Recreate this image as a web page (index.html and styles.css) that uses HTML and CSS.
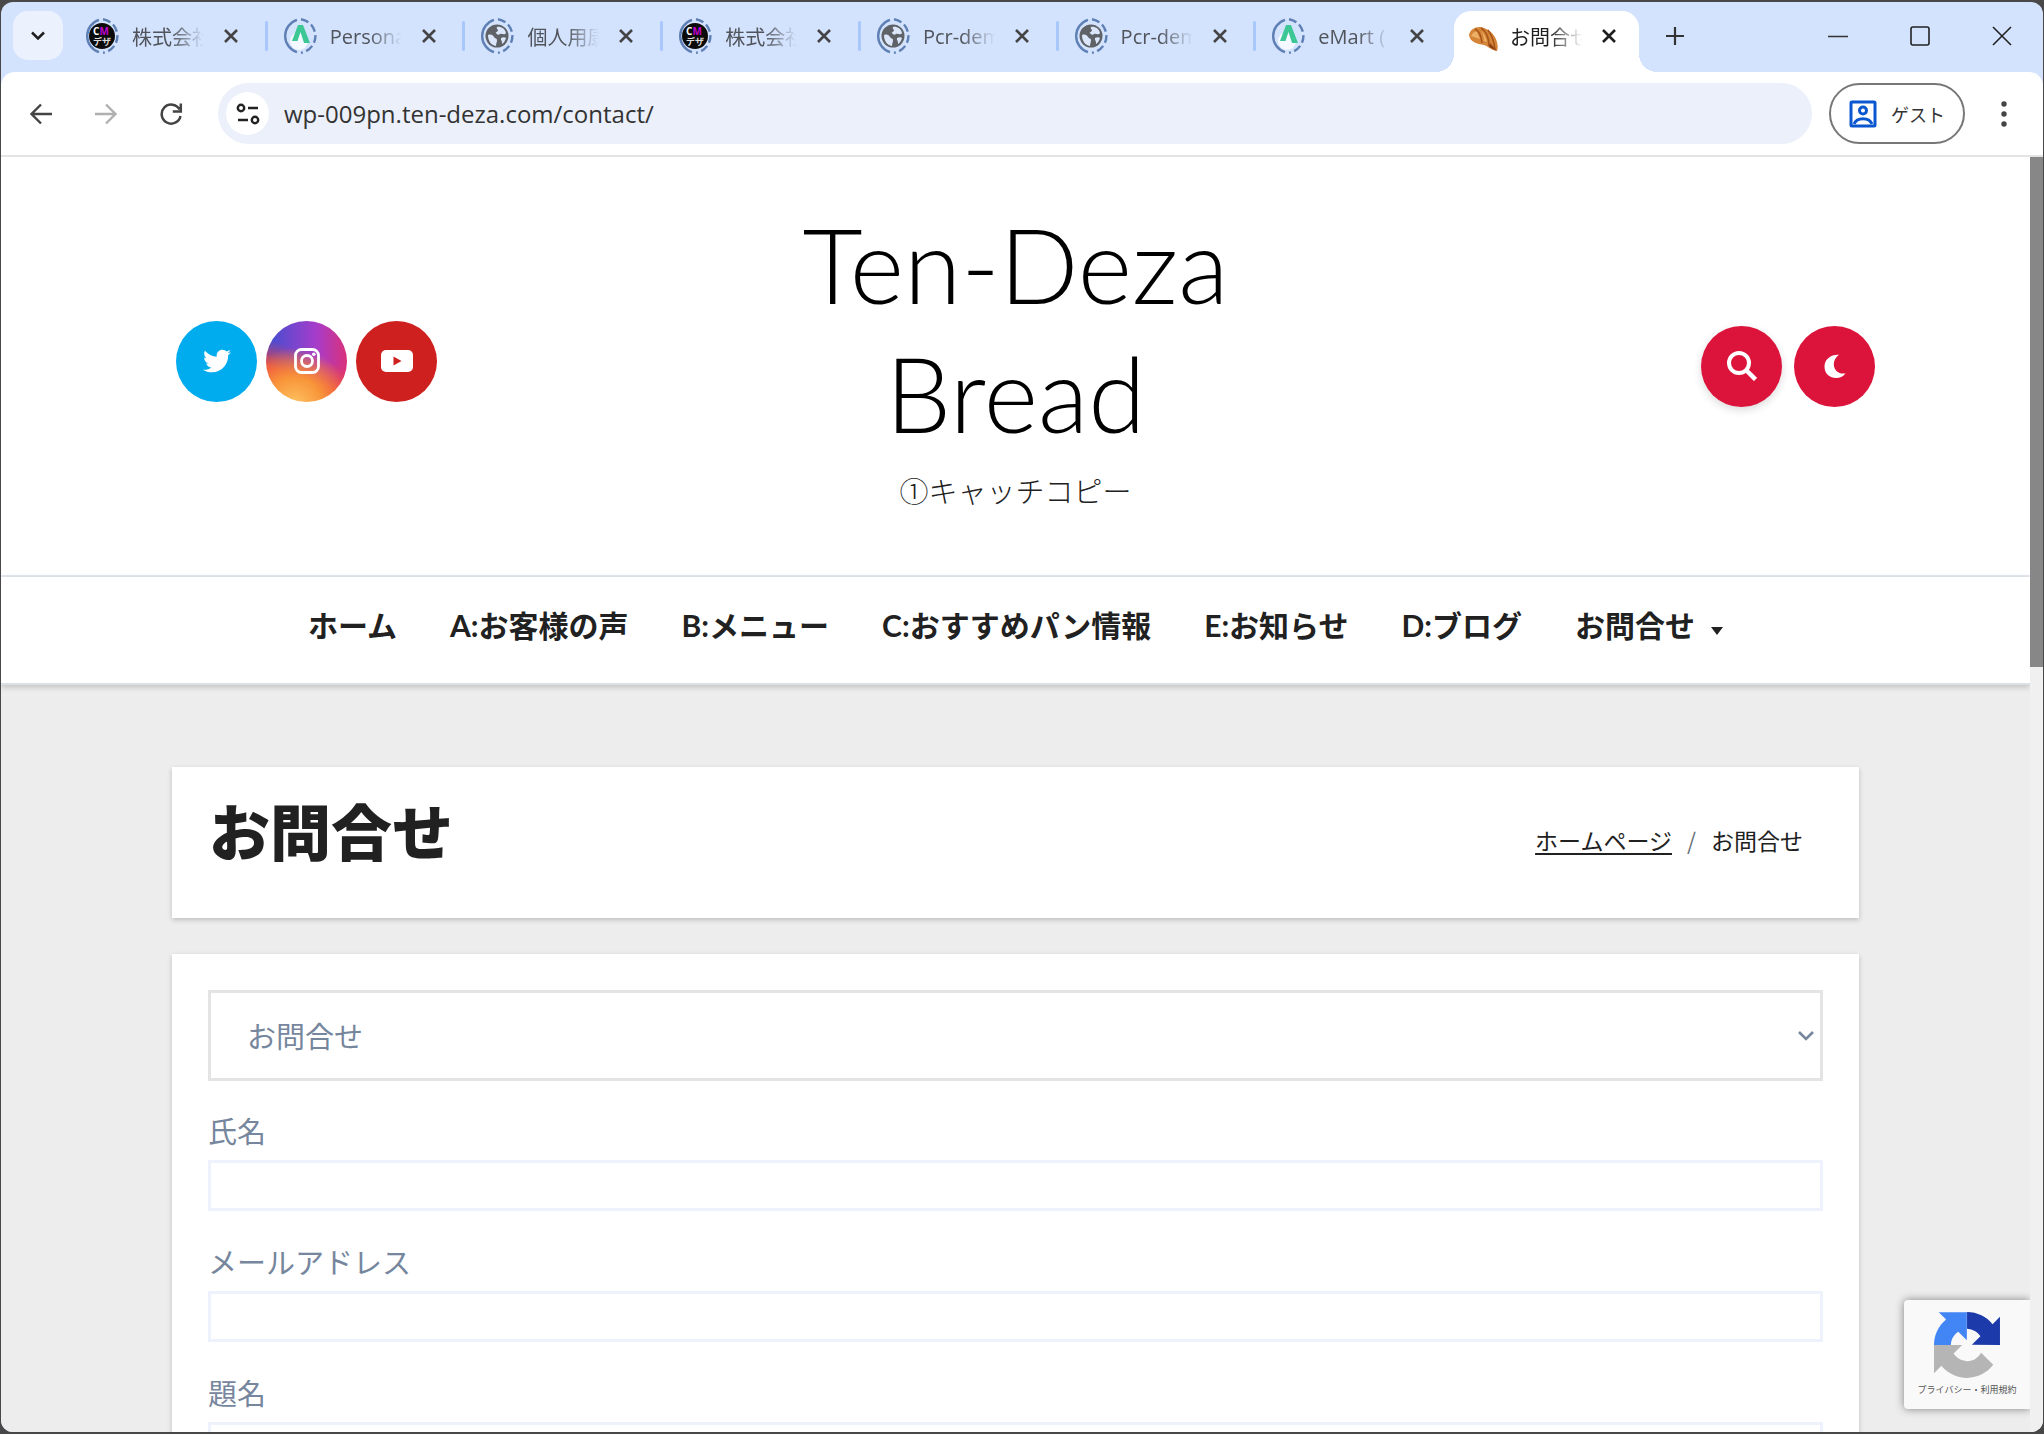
FILE: index.html
```html
<!DOCTYPE html>
<html lang="ja">
<head>
<meta charset="utf-8">
<meta name="viewport" content="width=device-width, initial-scale=1">
<title>お問合せ</title>
<link rel="stylesheet" href="styles.css">
</head>
<body>
<svg class="sprite" aria-hidden="true">
  <symbol id="ring" viewBox="0 0 36 36">
    <path d="M15 34.200A17 17 0 0 1 15 1.800" fill="none" stroke="#5f80b4" stroke-width="2.400"/>
    <path d="M19 1.200A17 17 0 0 1 19 34.800" fill="none" stroke="#5f80b4" stroke-width="2.400" stroke-dasharray="8 3.500"/>
  </symbol>
  <symbol id="fav-a" viewBox="0 0 36 36">
    <use href="#ring"/>
    <circle cx="17" cy="23" r="9" fill="#fff" opacity=".75"/>
    <path d="M10 23L16 7h5l7 18h-6L18.500 14l-3 9z" fill="#3cc795"/>
  </symbol>
  <symbol id="fav-globe" viewBox="0 0 36 36">
    <use href="#ring"/>
    <circle cx="18" cy="18" r="11.500" fill="#5f6368"/>
    <path d="M9 17c3-1 5 0 6 2 1 2 3 1 3 3 0 3-1 3-1 6-5-1-8-5-8-11zM18 9c3-1 8 1 9 6-2 3-4 0-6 1-1 1-3 1-4-1-1-1 2-1 2-3 0-1-2-1-1-3zM22 20c2-1 4-1 5 0-1 3-2 5-4 6 0-2 0-3-1-4z" fill="#dbe6fb"/>
  </symbol>
  <symbol id="x" viewBox="0 0 16 16"><path d="M2 2l12 12M14 2L2 14" fill="none" stroke="currentColor" stroke-width="2.600"/></symbol>
</svg>

<div class="window">
  <header class="tabstrip">
    <button class="tab-search" aria-label="タブを検索"><svg width="16" height="12" viewBox="0 0 16 12"><path d="M2 2.500l6 6 6-6" fill="none" stroke="#1f1f1f" stroke-width="2.500"/></svg></button>
    <div class="tabs">
      <div class="tab"><svg class="fav" viewBox="0 0 36 36"><use href="#ring"/><circle cx="18" cy="18" r="13" fill="#0b0b0b"/><text x="9" y="17" font-size="10" font-weight="700" fill="#fff">C<tspan fill="#c000d0">M</tspan></text><text x="9" y="27" font-size="9" font-weight="700" fill="#ddd">デザ</text></svg><span class="tab-title">株式会社</span><button class="tab-close" aria-label="閉じる"><svg><use href="#x"/></svg></button></div>
      <div class="tab"><svg class="fav"><use href="#fav-a"/></svg><span class="tab-title">Personal</span><button class="tab-close" aria-label="閉じる"><svg><use href="#x"/></svg></button></div>
      <div class="tab"><svg class="fav"><use href="#fav-globe"/></svg><span class="tab-title">個人用康</span><button class="tab-close" aria-label="閉じる"><svg><use href="#x"/></svg></button></div>
      <div class="tab"><svg class="fav" viewBox="0 0 36 36"><use href="#ring"/><circle cx="18" cy="18" r="13" fill="#0b0b0b"/><text x="9" y="17" font-size="10" font-weight="700" fill="#fff">C<tspan fill="#c000d0">M</tspan></text><text x="9" y="27" font-size="9" font-weight="700" fill="#ddd">デザ</text></svg><span class="tab-title">株式会社</span><button class="tab-close" aria-label="閉じる"><svg><use href="#x"/></svg></button></div>
      <div class="tab"><svg class="fav"><use href="#fav-globe"/></svg><span class="tab-title">Pcr-demo</span><button class="tab-close" aria-label="閉じる"><svg><use href="#x"/></svg></button></div>
      <div class="tab"><svg class="fav"><use href="#fav-globe"/></svg><span class="tab-title">Pcr-demo</span><button class="tab-close" aria-label="閉じる"><svg><use href="#x"/></svg></button></div>
      <div class="tab"><svg class="fav"><use href="#fav-a"/></svg><span class="tab-title">eMart (</span><button class="tab-close" aria-label="閉じる"><svg><use href="#x"/></svg></button></div>
      <div class="tab active">
        <svg class="fav" viewBox="0 0 36 36"><path d="M4 17c1-5 5-8 11-8 8 1 15 7 17 15 1 4 1 6 0 9-4 0-8-4-13-6-7-1-14-3-15-10z" fill="#d58538"/><path d="M10 11c3 1 6 6 7 14M16 10c5 3 8 10 8 18M23 12c4 5 6 12 7 19" fill="none" stroke="#a6531a" stroke-width="1.500"/><path d="M6 18c2-4 4-5 6-4l3 7zM16 13c3 2 5 7 6 11l-3-1c0-4-1-7-3-10z" fill="#edb066"/><path d="M25 25l7 8-8-4z" fill="#8d3f14"/></svg>
        <span class="tab-title">お問合せ</span><button class="tab-close" aria-label="閉じる"><svg><use href="#x"/></svg></button></div>
    </div>
    <button class="new-tab" aria-label="新しいタブ"><svg width="20" height="20" viewBox="0 0 20 20"><path d="M10 1v18M1 10h18" stroke="#333" stroke-width="2.200"/></svg></button>
    <div class="win-controls">
      <button aria-label="最小化"><svg width="20" height="20" viewBox="0 0 20 20"><path d="M0 10.500h20" stroke="#333" stroke-width="1.500"/></svg></button>
      <button aria-label="最大化"><svg width="20" height="20" viewBox="0 0 20 20"><rect x="1" y="1" width="18" height="18" rx="2" fill="none" stroke="#222" stroke-width="1.600"/></svg></button>
      <button aria-label="閉じる"><svg width="20" height="20" viewBox="0 0 20 20"><path d="M1 1l18 18M19 1L1 19" stroke="#222" stroke-width="1.600"/></svg></button>
    </div>
  </header>

  <div class="toolbar">
    <button class="nav-btn" aria-label="戻る"><svg width="24" height="24" viewBox="0 0 24 24"><path d="M23 12H3M12 2.500L2.500 12l9.500 9.500" fill="none" stroke="#444" stroke-width="2.400"/></svg></button>
    <button class="nav-btn" aria-label="進む"><svg width="24" height="24" viewBox="0 0 24 24"><path d="M1 12h20M12 2.500l9.500 9.500-9.500 9.500" fill="none" stroke="#b0b0b0" stroke-width="2.400"/></svg></button>
    <button class="nav-btn" aria-label="再読み込み"><svg width="24" height="24" viewBox="0 0 24 24"><path d="M20.500 7.500A9.500 9.500 0 1 0 21.500 14M21.800 1.500v8h-8" fill="none" stroke="#444" stroke-width="2.500"/></svg></button>
    <div class="omnibox">
      <button class="site-info" aria-label="サイト情報"><svg width="24" height="24" viewBox="0 0 24 24"><g fill="none" stroke="#222" stroke-width="2.400"><circle cx="5" cy="6" r="3.200"/><path d="M12 6h10M2 18h10"/><circle cx="19" cy="18" r="3.200"/></g></svg></button>
      <input class="url" type="text" aria-label="アドレス" value="wp-009pn.ten-deza.com/contact/">
    </div>
    <button class="guest"><svg width="28" height="28" viewBox="0 0 28 28"><g fill="none" stroke="#0b57d0" stroke-width="3"><rect x="2" y="2" width="24" height="24" rx="1"/><circle cx="14" cy="10.500" r="3.500"/><path d="M5 24c3-7 15-7 18 0"/></g></svg>ゲスト</button>
    <button class="menu" aria-label="メニュー"><svg width="6" height="26" viewBox="0 0 6 26"><g fill="#444"><circle cx="3" cy="3" r="2.700"/><circle cx="3" cy="13" r="2.700"/><circle cx="3" cy="23" r="2.700"/></g></svg></button>
  </div>

  <div class="viewport">
    <div class="page">
      <header class="site-header">
        <div class="social">
          <a class="round twitter" href="#" aria-label="Twitter"><svg width="28" height="28" viewBox="0 0 512 512"><path fill="#fff" d="M459.370 151.716c.325 4.548.325 9.097.325 13.645 0 138.720-105.583 298.558-298.558 298.558-59.452 0-114.680-17.219-161.137-47.106 8.447.974 16.568 1.299 25.340 1.299 49.055 0 94.213-16.568 130.274-44.832-46.132-.975-84.792-31.188-98.112-72.772 6.498.974 12.995 1.624 19.818 1.624 9.421 0 18.843-1.300 27.614-3.573-48.081-9.747-84.143-51.980-84.143-102.985v-1.299c13.969 7.797 30.214 12.670 47.431 13.319-28.264-18.843-46.781-51.005-46.781-87.391 0-19.492 5.197-37.360 14.294-52.954 51.655 63.675 129.300 105.258 216.365 109.807-1.624-7.797-2.599-15.918-2.599-24.040 0-57.828 46.782-104.934 104.934-104.934 30.213 0 57.502 12.670 76.670 33.137 23.715-4.548 46.456-13.320 66.599-25.340-7.798 24.366-24.366 44.833-46.132 57.827 21.117-2.273 41.584-8.122 60.426-16.243-14.292 20.791-32.161 39.308-52.628 54.253z"/></svg></a>
          <a class="round instagram" href="#" aria-label="Instagram"><svg width="28" height="28" viewBox="0 0 28 28"><g fill="none" stroke="#fff"><rect x="2.500" y="2.500" width="23" height="23" rx="6" stroke-width="2.800"/><circle cx="14" cy="14" r="5.500" stroke-width="2.800"/></g><circle cx="20.800" cy="7.200" r="1.800" fill="#fff"/></svg></a>
          <a class="round youtube" href="#" aria-label="YouTube"><svg width="32" height="24" viewBox="0 0 32 24"><rect x="0" y="1" width="32" height="22" rx="5" fill="#fff"/><path d="M12.500 7.500v9l8-4.500z" fill="#cd201f"/></svg></a>
        </div>
        <div class="brand">
          <h1><a href="#">Ten-Deza<br>Bread</a></h1>
          <p>①キャッチコピー</p>
        </div>
        <div class="tools">
          <button class="round search" aria-label="検索"><svg width="30" height="30" viewBox="0 0 30 30"><g fill="none" stroke="#fff"><circle cx="12" cy="12" r="10" stroke-width="4"/><path d="M19 19l9.500 9.500" stroke-width="4.500"/></g></svg></button>
          <button class="round" aria-label="ダークモード"><svg width="22" height="24" viewBox="0 0 22 24"><path d="M15 .700C8 0 .500 4.500.500 12.500.500 20 6 24 12 24c4 0 7-1.500 9.500-4.500C10 21 5.500 8 15 .700z" fill="#fff"/></svg></button>
        </div>
      </header>
      <nav class="site-nav">
        <a href="#">ホーム</a>
        <a href="#">A:お客様の声</a>
        <a href="#">B:メニュー</a>
        <a href="#">C:おすすめパン情報</a>
        <a href="#">E:お知らせ</a>
        <a href="#">D:ブログ</a>
        <a href="#">お問合せ<span class="caret"></span></a>
      </nav>
      <main>
        <section class="card title-card">
          <h2>お問合せ</h2>
          <div class="crumbs"><a href="#">ホームページ</a><span class="slash">/</span><span>お問合せ</span></div>
        </section>
        <form class="card form-card">
          <div class="select-wrap">
            <select aria-label="お問合せ"><option>お問合せ</option></select>
            <svg class="chevron" width="18" height="12" viewBox="0 0 18 12"><path d="M2 2l7 7 7-7" fill="none" stroke="#76869d" stroke-width="2.600"/></svg>
          </div>
          <label for="name">氏名</label><input id="name" type="text">
          <label for="mail">メールアドレス</label><input id="mail" type="email">
          <label for="subject">題名</label><input id="subject" type="text">
        </form>
      </main>
      <a class="recaptcha" href="#">
        <svg width="66" height="66" viewBox="0 0 64 64"><path d="M64 31.955l-.033-1.370V4.687l-7.160 7.160C50.948 4.674 42.033.093 32.050.093v16.160c.485 0 .860.057 1.135.163 4.976.393 9.288 3.140 11.828 7.124l-8.307 8.307L64 31.953" fill="#1c3aa9"/><path d="M31.862.094l-1.370.033H4.594l7.160 7.160C4.580 13.147 0 22.060 0 32.046h16.260c0-.485.057-.860.163-1.135.393-4.976 3.140-9.288 7.124-11.828l8.307 8.307L31.860.095" fill="#4285f4"/><path d="M.001 32.045l.033 1.370v25.898l7.160-7.160c5.860 7.173 14.774 11.754 24.760 11.754 10.400 0 19.622-4.960 25.458-12.640l-11.736-11.860a15.550 15.550 0 0 1-4.754 5.334c-2.050 1.600-4.952 2.906-8.968 2.906-.485 0-.860-.057-1.135-.163-4.976-.393-9.288-3.140-11.828-7.124l8.307-8.307c-10.522.040-22.400.066-27.295-.005" fill="#b5b5b5"/></svg>
        <span>プライバシー・利用規約</span>
      </a>
    </div>
    <div class="scrollbar"><div class="thumb"></div></div>
  </div>
</div>
</body>
</html>
```

FILE: styles.css
```css
* { box-sizing: border-box; }

body {
  margin: 0;
  height: 100vh;
  padding: 2px 1px;
  overflow: hidden;
  background: #484848;
  color: #212121;
  font-family: "Noto Sans CJK JP", sans-serif;
}

button {
  display: flex;
  align-items: center;
  justify-content: center;
  padding: 0;
  border: 0;
  background: none;
  font: inherit;
  color: inherit;
}

a { color: inherit; text-decoration: none; }
svg { flex: none; }
.sprite { position: absolute; width: 0; height: 0; }

.window {
  display: flex;
  flex-direction: column;
  height: 100%;
  border-radius: 12px;
  overflow: hidden;
  background: #d3e2fd;
}

/* Tab strip */
.tabstrip {
  display: flex;
  align-items: flex-start;
  height: 70px;
  padding-left: 12px;
  font-family: "Open Sans", "Noto Sans CJK JP", sans-serif;
  font-size: 20px;
}
.tab-search {
  flex: none;
  width: 50px;
  height: 49px;
  margin-top: 9px;
  border-radius: 15px;
  background: #ebf2fe;
}
.tabs {
  display: flex;
  flex: 0 1 1569px;
  min-width: 0;
  margin: 9px 0 0 7px;
}
.tab {
  position: relative;
  display: flex;
  align-items: center;
  flex: 1 1 0;
  min-width: 0;
  height: 50px;
  padding-left: 14px;
  color: #50545b;
}
.tab:not(.active)::after {
  content: "";
  position: absolute;
  right: 0;
  top: 10px;
  width: 3px;
  height: 30px;
  border-radius: 2px;
  background: #a8c7fa;
}
.tab:nth-child(7)::after { display: none; }
.fav { width: 36px; height: 36px; margin-right: 12px; }
.tab-title {
  width: 72px;
  overflow: hidden;
  white-space: nowrap;
  -webkit-mask-image: linear-gradient(90deg, #000 55%, transparent);
  mask-image: linear-gradient(90deg, #000 55%, transparent);
}
.tab-close { width: 18px; height: 18px; margin-left: 18px; color: #444; }
.tab-close svg { width: 16px; height: 16px; }
.tab.active {
  flex: 0 0 185px;
  height: 61px;
  padding: 0 0 11px 11px;
  border-radius: 17px 17px 0 0;
  background: #fff;
  color: #1f1f1f;
}
.tab.active .fav { margin-right: 9px; }
.tab.active .tab-close { color: #1f1f1f; }
.tab.active::before,
.tab.active::after {
  content: "";
  position: absolute;
  bottom: 0;
  width: 18px;
  height: 18px;
}
.tab.active::before { left: -18px; background: radial-gradient(circle at 0 0, transparent 18px, #fff 18px); }
.tab.active::after { right: -18px; background: radial-gradient(circle at 100% 0, transparent 18px, #fff 18px); }
.new-tab { width: 40px; height: 40px; margin: 14px 0 0 16px; }
.win-controls { display: flex; margin-left: auto; }
.win-controls button { width: 82px; height: 68px; }

/* Toolbar */
.toolbar {
  display: flex;
  align-items: center;
  height: 85px;
  padding: 0 14px 0 7px;
  border-bottom: 2px solid #e4e4e4;
  border-radius: 14px 14px 0 0;
  background: #fff;
}
.nav-btn { width: 65px; height: 60px; }
.omnibox {
  display: flex;
  flex: 1;
  align-items: center;
  gap: 15px;
  height: 61px;
  margin-left: 15px;
  padding-left: 8px;
  border-radius: 31px;
  background: #ebf0fa;
}
.site-info { width: 43px; height: 43px; border-radius: 50%; background: #fff; }
.url {
  flex: 1;
  padding: 0;
  border: 0;
  outline: 0;
  background: none;
  color: #333;
  font: 24px/36px "Open Sans", sans-serif;
}
.guest {
  gap: 14px;
  width: 136px;
  height: 61px;
  margin-left: 17px;
  border: 2px solid #777;
  border-radius: 31px;
  color: #333;
  font-size: 18px;
}
.menu { width: 50px; height: 50px; margin-left: 14px; }

/* Viewport */
.viewport { display: flex; flex: 1; min-height: 0; background: #ededed; }
.page { position: relative; flex: 1; min-width: 0; overflow: hidden; }
.scrollbar { width: 13px; background: #f0f0f0; }
.thumb { height: 40%; background: #878787; }

.site-header {
  display: grid;
  grid-template-columns: 1fr auto 1fr;
  align-items: center;
  padding: 42px 155px;
  border-bottom: 2px solid #e4eaef;
  background: #fff;
}
.social { display: flex; gap: 9px; padding: 0 0 10px 20px; }
.tools { display: flex; justify-content: flex-end; gap: 12px; }
.round {
  display: flex;
  align-items: center;
  justify-content: center;
  width: 81px;
  height: 81px;
  border-radius: 50%;
  background: #dc143c;
}
.search { box-shadow: 0 3px 8px rgba(0, 0, 0, .15); }
.twitter { background: #00acee; }
.youtube { background: #cd201f; }
.instagram {
  background:
    radial-gradient(circle at 35% 105%, #fec564, #f8963a 28%, transparent 58%),
    linear-gradient(200deg, transparent 42%, #ee4140 68%),
    linear-gradient(90deg, #3f4fd0, #a63ccb 62%, #d9317a);
}
.brand { padding-bottom: 22px; text-align: center; }
.brand h1 {
  margin: 0;
  color: #000;
  font: 300 104px/129px Lato, sans-serif;
}
.brand p { margin: 12px 0 0; font-size: 29px; font-weight: 300; line-height: 42px; }

.site-nav {
  position: relative;
  display: flex;
  justify-content: center;
  gap: 53px;
  padding: 27px 0 37px;
  border-bottom: 2px solid #d9e0e6;
  background: #fff;
  box-shadow: 0 2px 6px rgba(0, 0, 0, .2);
  font: 700 30px/42px Lato, "Noto Sans CJK JP", sans-serif;
}
.site-nav a { white-space: nowrap; }
.caret {
  display: inline-block;
  margin-left: 16px;
  border: 6px solid transparent;
  border-top: 8px solid #212121;
  border-bottom: 0;
  vertical-align: 2px;
}

main {
  display: flex;
  flex-direction: column;
  gap: 36px;
  padding: 82px 171px 0;
}
.card { background: #fff; box-shadow: 0 2px 5px rgba(0, 0, 0, .2); }
.title-card {
  display: flex;
  align-items: center;
  justify-content: space-between;
  padding: 19px 56px 45px 37px;
}
.title-card h2 { margin: 0; font-size: 61px; font-weight: 900; line-height: 87px; }
.crumbs {
  display: flex;
  gap: 15px;
  padding-top: 20px;
  font-size: 23px;
  line-height: 34px;
}
.crumbs a { text-decoration: underline; text-underline-offset: 3px; }
.slash { color: #6c757d; }

.form-card {
  padding: 36px;
  color: #76869d;
  font-size: 29px;
  line-height: 42px;
}
.select-wrap { position: relative; margin-bottom: 28px; }
.chevron { position: absolute; right: 8px; top: 40px; pointer-events: none; }
select {
  display: block;
  width: 100%;
  height: 91px;
  padding: 0 36px 2px;
  border: 3px solid #e4e4e4;
  border-radius: 0;
  appearance: none;
  background: #fff;
  color: inherit;
  font: inherit;
}
.form-card label { display: block; margin-bottom: 9px; }
.form-card input {
  display: block;
  width: 100%;
  height: 51px;
  margin-bottom: 29px;
  border: 3px solid #edf2fd;
  background: #fff;
  font: inherit;
}

.recaptcha {
  position: absolute;
  right: 0;
  bottom: 23px;
  display: flex;
  flex-direction: column;
  align-items: center;
  gap: 5px;
  width: 126px;
  height: 109px;
  padding-top: 12px;
  border-radius: 4px 0 0 4px;
  background: #f9f9f9;
  box-shadow: 0 0 8px #808080;
  color: #555;
  font-size: 9px;
  line-height: 13px;
}
```
